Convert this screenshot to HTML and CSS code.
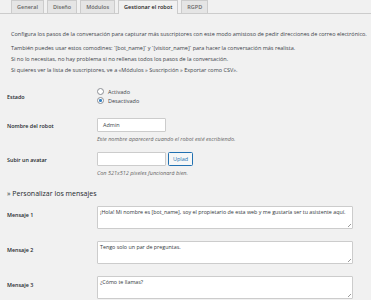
FILE: index.html
```html
<!DOCTYPE html>
<html lang="es">
<head>
<meta charset="utf-8">
<link rel="stylesheet" href="styles.css">
</head>
<body>
<nav class="tabs">
  <a class="tab">General</a>
  <a class="tab">Diseño</a>
  <a class="tab">Módulos</a>
  <a class="tab active">Gestionar el robot</a>
  <a class="tab">RGPD</a>
</nav>
<div class="intro">
  <p class="lead">Configura los pasos de la conversación para capturar más suscriptores con este modo amistoso de pedir direcciones de correo electrónico.</p>
  <p class="notes">También puedes usar estos comodines: `[bot_name]` y `[visitor_name]` para hacer la conversación más realista.<br>Si no lo necesitas, no hay problema si no rellenas todos los pasos de la conversación.<br>Si quieres ver la lista de suscriptores, ve a «Módulos » Suscripción » Exportar como CSV».</p>
</div>
<div class="form">
  <div class="row row-estado">
    <div class="label">Estado</div>
    <div class="field radios">
      <label class="radio"><span class="dot"></span>Activado</label>
      <label class="radio"><span class="dot checked"></span>Desactivado</label>
    </div>
  </div>
  <div class="row row-name">
    <div class="label">Nombre del robot</div>
    <div class="field">
      <div class="input">Admin</div>
      <div class="help">Este nombre aparecerá cuando el robot esté escribiendo.</div>
    </div>
  </div>
  <div class="row row-avatar">
    <div class="label">Subir un avatar</div>
    <div class="field">
      <div class="upload"><div class="input"></div><span class="btn">Uplad</span></div>
      <div class="help">Con 521x512 píxeles funcionará bien.</div>
    </div>
  </div>
</div>
<h3 class="section">» Personalizar los mensajes</h3>
<div class="form messages">
  <div class="row msg">
    <div class="label">Mensaje 1</div>
    <div class="field"><div class="textarea">¡Hola! Mi nombre es [bot_name], soy el propietario de esta web y me gustaría ser tu asistente aquí.</div></div>
  </div>
  <div class="row msg">
    <div class="label">Mensaje 2</div>
    <div class="field"><div class="textarea">Tengo solo un par de preguntas.</div></div>
  </div>
  <div class="row msg">
    <div class="label">Mensaje 3</div>
    <div class="field"><div class="textarea">¿Cómo te llamas?</div></div>
  </div>
</div>
</body>
</html>
```

FILE: styles.css
```css
html, body {
  margin: 0;
  padding: 0;
  background: #f1f1f1;
}
body {
  font-family: "Open Sans", "Noto Sans", sans-serif;
  font-size: 5.5px;
  color: #3c434a;
  width: 371px;
  height: 300px;
  overflow: hidden;
}
.tabs {
  display: flex;
  gap: 3px;
  padding-left: 11px;
  height: 13px;
  border-bottom: 1px solid #ccc;
  align-items: flex-end;
}
.tab {
  display: block;
  height: 13px;
  box-sizing: border-box;
  padding: 0 5px;
  line-height: 12px;
  font-size: 5.5px;
  font-weight: 600;
  color: #666;
  background: #e5e5e5;
  border: 1px solid #ccc;
  border-bottom: none;
}
.tab.active {
  background: #f1f1f1;
  color: #222;
  height: 14px;
  margin-bottom: -1px;
}
.intro {
  padding: 0 0 0 11px;
}
.intro p {
  margin: 0;
  white-space: nowrap;
}
.lead {
  padding-top: 15px;
  line-height: 10px;
}
.notes {
  margin-top: 4px !important;
  line-height: 11px;
}
.form {
  padding-left: 7px;
}
.row {
  display: grid;
  grid-template-columns: 90px 1fr;
}
.label {
  font-weight: 600;
  color: #23282d;
  font-size: 5.4px;
}
.row-estado {
  margin-top: 12px;
}
.row-estado .label {
  padding-top: 5px;
}
.radios {
  display: flex;
  flex-direction: column;
  gap: 2px;
}
.radio {
  display: flex;
  align-items: center;
  gap: 4px;
  line-height: 6px;
}
.dot {
  width: 5px;
  height: 5px;
  border: 1px solid #8c8f94;
  border-radius: 50%;
  background: #fff;
  box-sizing: content-box;
  position: relative;
}
.dot.checked::after {
  content: "";
  position: absolute;
  left: 1.25px;
  top: 1.25px;
  width: 2.5px;
  height: 2.5px;
  border-radius: 50%;
  background: #3582c4;
}
.row-name {
  margin-top: 14px;
}
.row-name .label,
.row-avatar .label {
  padding-top: 4px;
}
.input {
  height: 12px;
  box-sizing: content-box;
  border: 1px solid #ccc;
  background: #fff;
  border-radius: 1px;
  padding: 0 0 0 5px;
  line-height: 12px;
  width: 62px;
}
.help {
  margin-top: 3px;
  font-style: italic;
  color: #666;
  line-height: 8px;
}
.row-avatar {
  margin-top: 9px;
}
.upload {
  display: flex;
  gap: 2px;
  align-items: center;
}
.btn {
  display: block;
  height: 12px;
  line-height: 12px;
  padding: 0 4px;
  border: 1px solid #2271b1;
  border-radius: 1.5px;
  color: #2271b1;
  background: #f6f7f7;
}
.section {
  margin: 12px 0 0 7px;
  font-size: 7px;
  font-weight: 400;
  color: #23282d;
  line-height: 10px;
}
.messages {
  margin-top: 7px;
}
.msg {
  margin-bottom: 12px;
}
.msg .label {
  padding-top: 5px;
}
.textarea {
  width: 250px;
  height: 20px;
  box-sizing: content-box;
  border: 1px solid #ccc;
  background: #fff;
  border-radius: 1px;
  padding: 1px 2px 0 2px;
  font-size: 5.35px;
  line-height: 8px;
  color: #32373c;
  white-space: nowrap;
  position: relative;
}
.textarea::after {
  content: "";
  position: absolute;
  right: 1px;
  bottom: 1px;
  width: 3px;
  height: 3px;
  background: linear-gradient(135deg, transparent 45%, #9a9a9a 45%, #9a9a9a 55%, transparent 55%, transparent 70%, #9a9a9a 70%, #9a9a9a 80%, transparent 80%);
}
```
